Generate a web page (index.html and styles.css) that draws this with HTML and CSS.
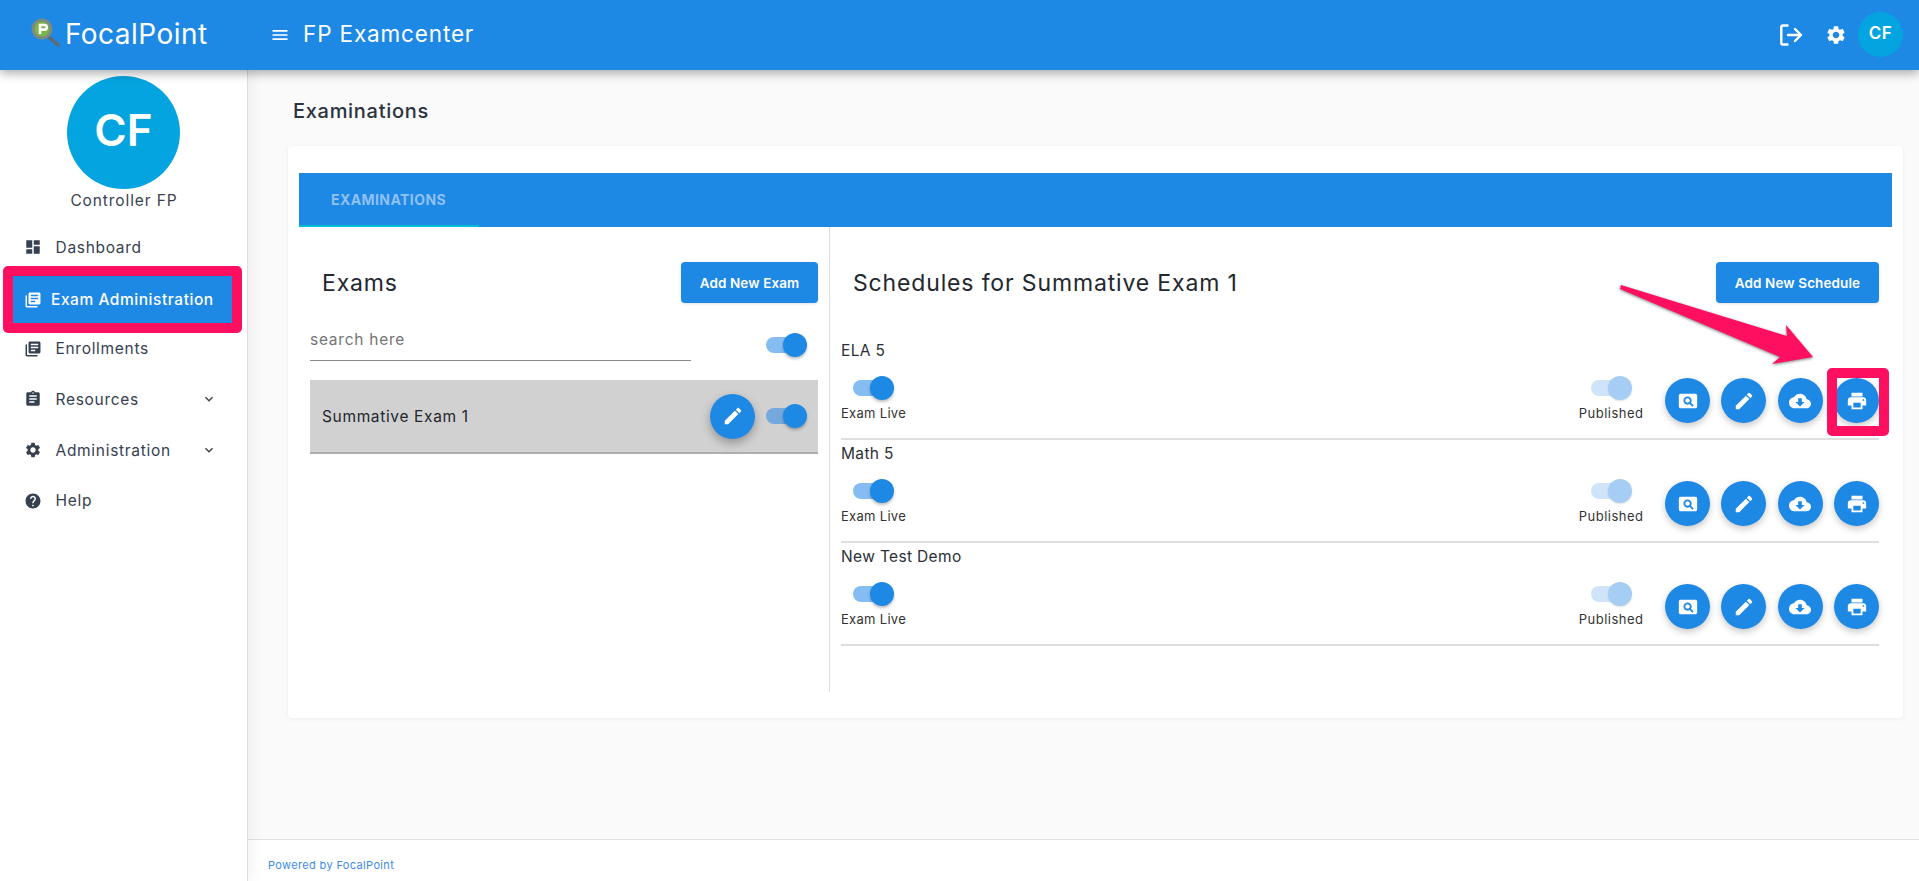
FILE: index.html
```html
<!DOCTYPE html>
<html lang="en">
<head>
<meta charset="utf-8">
<title>FP Examcenter</title>
<link rel="stylesheet" href="styles.css">
</head>
<body>
<svg class="defs" width="0" height="0" aria-hidden="true">
  <symbol id="i-dashboard" viewBox="0 0 24 24"><path d="M3 13h8V3H3v10zm0 8h8v-6H3v6zm10 0h8V11h-8v10zm0-18v6h8V3h-8z"/></symbol>
  <symbol id="i-books" viewBox="0 0 24 24"><path d="M4 6H2v14c0 1.1.9 2 2 2h14v-2H4V6zm16-4H8c-1.1 0-2 .9-2 2v12c0 1.1.9 2 2 2h12c1.1 0 2-.9 2-2V4c0-1.1-.9-2-2-2zm-1 9H9V9h10v2zm-4 4H9v-2h6v2zm4-8H9V5h10v2z"/></symbol>
  <symbol id="i-assignment" viewBox="0 0 24 24"><path d="M19 3h-4.18C14.4 1.84 13.3 1 12 1c-1.3 0-2.4.84-2.82 2H5c-1.1 0-2 .9-2 2v14c0 1.1.9 2 2 2h14c1.1 0 2-.9 2-2V5c0-1.1-.9-2-2-2zm-7 0c.55 0 1 .45 1 1s-.45 1-1 1-1-.45-1-1 .45-1 1-1zm2 14H7v-2h7v2zm3-4H7v-2h10v2zm0-4H7V7h10v2z"/></symbol>
  <symbol id="i-settings" viewBox="0 0 24 24"><path d="M19.14 12.94c.04-.3.06-.61.06-.94 0-.32-.02-.64-.07-.94l2.03-1.58c.18-.14.23-.41.12-.61l-1.92-3.32c-.12-.22-.37-.29-.59-.22l-2.39.96c-.5-.38-1.03-.7-1.62-.94l-.36-2.54c-.04-.24-.24-.41-.48-.41h-3.84c-.24 0-.43.17-.47.41l-.36 2.54c-.59.24-1.13.57-1.62.94l-2.39-.96c-.22-.08-.47 0-.59.22L2.74 8.87c-.12.21-.08.47.12.61l2.03 1.58c-.05.3-.09.63-.09.94s.02.64.07.94l-2.03 1.58c-.18.14-.23.41-.12.61l1.92 3.32c.12.22.37.29.59.22l2.39-.96c.5.38 1.03.7 1.62.94l.36 2.54c.05.24.24.41.48.41h3.84c.24 0 .44-.17.47-.41l.36-2.54c.59-.24 1.13-.56 1.62-.94l2.39.96c.22.08.47 0 .59-.22l1.92-3.32c.12-.22.07-.47-.12-.61l-2.01-1.58zM12 15.6c-1.98 0-3.6-1.62-3.6-3.6s1.62-3.6 3.6-3.6 3.6 1.62 3.6 3.6-1.62 3.6-3.6 3.6z"/></symbol>
  <symbol id="i-help" viewBox="0 0 24 24"><path d="M12 2C6.48 2 2 6.48 2 12s4.48 10 10 10 10-4.48 10-10S17.52 2 12 2zm1 17h-2v-2h2v2zm2.07-7.75l-.9.92C13.45 12.9 13 13.5 13 15h-2v-.5c0-1.1.45-2.1 1.17-2.83l1.24-1.26c.37-.36.59-.86.59-1.41 0-1.1-.9-2-2-2s-2 .9-2 2H8c0-2.21 1.79-4 4-4s4 1.79 4 4c0 .88-.36 1.68-.93 2.25z"/></symbol>
  <symbol id="i-edit" viewBox="0 0 24 24"><path d="M3 17.25V21h3.75L17.81 9.94l-3.75-3.75L3 17.25zM20.71 7.04c.39-.39.39-1.02 0-1.41l-2.34-2.34c-.39-.39-1.02-.39-1.41 0l-1.83 1.83 3.75 3.75 1.83-1.83z"/></symbol>
  <symbol id="i-print" viewBox="0 0 24 24"><path d="M19 8H5c-1.66 0-3 1.34-3 3v6h4v4h12v-4h4v-6c0-1.66-1.34-3-3-3zm-3 11H8v-5h8v5zm3-7c-.55 0-1-.45-1-1s.45-1 1-1 1 .45 1 1-.45 1-1 1zm-1-9H6v4h12V3z"/></symbol>
  <symbol id="i-cloud" viewBox="0 0 24 24"><path d="M19.35 10.04C18.67 6.59 15.64 4 12 4 9.11 4 6.6 5.64 5.35 8.04 2.34 8.36 0 10.91 0 14c0 3.31 2.69 6 6 6h13c2.76 0 5-2.24 5-5 0-2.64-2.05-4.78-4.65-4.96zM17 13l-5 5-5-5h3V9h4v4h3z"/></symbol>
  <symbol id="i-pageview" viewBox="0 0 24 24"><path d="M11.5 9C10.12 9 9 10.12 9 11.5s1.12 2.5 2.5 2.5 2.5-1.12 2.5-2.5S12.88 9 11.5 9zM20 4H4c-1.1 0-2 .9-2 2v12c0 1.1.9 2 2 2h16c1.1 0 2-.9 2-2V6c0-1.1-.9-2-2-2zm-3.21 14.21l-2.91-2.91c-.69.44-1.51.7-2.38.7C9 16 7 14 7 11.5S9 7 11.5 7 16 9 16 11.5c0 .88-.26 1.69-.7 2.39l2.91 2.9-1.42 1.42z"/></symbol>
  <symbol id="i-more" viewBox="0 0 24 24"><path d="M16.59 8.59L12 13.17 7.41 8.59 6 10l6 6 6-6z"/></symbol>
  <symbol id="i-menu" viewBox="0 0 24 24"><path d="M3 18h18v-2H3v2zm0-5h18v-2H3v2zm0-7v2h18V6H3z"/></symbol>
</svg>

<div class="app">
  <header class="topbar">
    <div class="brand">
      <svg class="brand-logo" viewBox="0 0 30 30" aria-hidden="true">
        <path class="logo-handle" d="M19 19l9 8"/>
        <circle class="logo-lens" cx="12" cy="11" r="9"/>
        <path class="logo-mark" d="M10 16V7h4.5a2.2 2.2 0 0 1 0 4.6H10"/>
      </svg>
      <span class="brand-name">FocalPoint</span>
    </div>
    <svg class="menu-icon"><use href="#i-menu"/></svg>
    <span class="app-title">FP Examcenter</span>
    <div class="top-actions">
      <svg class="logout-icon" viewBox="0 0 24 24" aria-hidden="true">
        <path d="M9 2.5H4a1.2 1.2 0 0 0-1.2 1.2v16.6A1.2 1.2 0 0 0 4 21.5h5"/>
        <path d="M9.5 12h13M16.5 6l6 6-6 6"/>
      </svg>
      <svg class="gear-icon"><use href="#i-settings"/></svg>
      <div class="top-avatar">CF</div>
    </div>
  </header>

  <div class="body">
    <aside class="sidebar">
      <div class="avatar">CF</div>
      <div class="user-name">Controller FP</div>
      <nav class="nav">
        <a class="nav-item"><svg class="nav-icon"><use href="#i-dashboard"/></svg><span>Dashboard</span></a>
        <a class="nav-item active"><svg class="nav-icon"><use href="#i-books"/></svg><span>Exam Administration</span></a>
        <a class="nav-item"><svg class="nav-icon"><use href="#i-books"/></svg><span>Enrollments</span></a>
        <a class="nav-item"><svg class="nav-icon"><use href="#i-assignment"/></svg><span>Resources</span><svg class="chev"><use href="#i-more"/></svg></a>
        <a class="nav-item"><svg class="nav-icon"><use href="#i-settings"/></svg><span>Administration</span><svg class="chev"><use href="#i-more"/></svg></a>
        <a class="nav-item"><svg class="nav-icon"><use href="#i-help"/></svg><span>Help</span></a>
      </nav>
    </aside>

    <main class="main">
      <div class="content">
        <h1 class="page-title">Examinations</h1>
        <section class="card">
          <div class="tabbar"><div class="tab">EXAMINATIONS</div></div>
          <div class="columns">
            <div class="exams">
              <div class="col-head">
                <h2 class="col-title">Exams</h2>
                <button class="btn">Add New Exam</button>
              </div>
              <div class="search-row">
                <div class="search">search here</div>
                <div class="toggle on"><i></i></div>
              </div>
              <div class="exam-row">
                <span class="exam-name">Summative Exam 1</span>
                <div class="exam-tools">
                  <button class="fab raised"><svg><use href="#i-edit"/></svg></button>
                  <div class="toggle on on-grey"><i></i></div>
                </div>
              </div>
            </div>

            <div class="schedules">
              <div class="col-head sched-head">
                <h2 class="col-title">Schedules for Summative Exam 1</h2>
                <button class="btn">Add New Schedule</button>
              </div>

              <div class="sched-row">
                <div class="sched-left">
                  <div class="sched-name">ELA 5</div>
                  <div class="toggle on inset"><i></i></div>
                  <div class="tiny">Exam Live</div>
                </div>
                <div class="sched-right">
                  <div class="pub"><div class="toggle off"><i></i></div><div class="tiny">Published</div></div>
                  <div class="fabs">
                    <button class="fab"><svg><use href="#i-pageview"/></svg></button>
                    <button class="fab"><svg><use href="#i-edit"/></svg></button>
                    <button class="fab"><svg><use href="#i-cloud"/></svg></button>
                    <button class="fab"><svg><use href="#i-print"/></svg></button>
                  </div>
                </div>
              </div>

              <div class="sched-row">
                <div class="sched-left">
                  <div class="sched-name">Math 5</div>
                  <div class="toggle on inset"><i></i></div>
                  <div class="tiny">Exam Live</div>
                </div>
                <div class="sched-right">
                  <div class="pub"><div class="toggle off"><i></i></div><div class="tiny">Published</div></div>
                  <div class="fabs">
                    <button class="fab"><svg><use href="#i-pageview"/></svg></button>
                    <button class="fab"><svg><use href="#i-edit"/></svg></button>
                    <button class="fab"><svg><use href="#i-cloud"/></svg></button>
                    <button class="fab"><svg><use href="#i-print"/></svg></button>
                  </div>
                </div>
              </div>

              <div class="sched-row">
                <div class="sched-left">
                  <div class="sched-name">New Test Demo</div>
                  <div class="toggle on inset"><i></i></div>
                  <div class="tiny">Exam Live</div>
                </div>
                <div class="sched-right">
                  <div class="pub"><div class="toggle off"><i></i></div><div class="tiny">Published</div></div>
                  <div class="fabs">
                    <button class="fab"><svg><use href="#i-pageview"/></svg></button>
                    <button class="fab"><svg><use href="#i-edit"/></svg></button>
                    <button class="fab"><svg><use href="#i-cloud"/></svg></button>
                    <button class="fab"><svg><use href="#i-print"/></svg></button>
                  </div>
                </div>
              </div>
            </div>
          </div>
        </section>
      </div>
      <footer class="footer">Powered by FocalPoint</footer>
    </main>
  </div>
</div>

<div class="mark mark-nav"></div>
<div class="mark mark-print"></div>
<svg class="mark-arrow" viewBox="0 0 1919 881" aria-hidden="true">
  <path d="M1621 285L1787 336L1786 325L1813 357L1772 364L1780 357L1620 289Z"/>
</svg>
</body>
</html>
```

FILE: styles.css
```css
* { box-sizing: border-box; }
html, body { margin: 0; height: 100%; overflow: hidden; }
body {
  font-family: Inter, "Noto Sans", "Liberation Sans", sans-serif;
  color: #2b2f36;
  background: #fafafa;
  position: relative;
}
.defs { position: absolute; }
svg { fill: currentColor; display: block; }
h1, h2 { margin: 0; font-weight: 400; }
button { font-family: inherit; border: 0; cursor: pointer; }

.app { height: 100vh; display: flex; flex-direction: column; }

/* top bar */
.topbar {
  height: 70px;
  flex: none;
  background: #1e88e5;
  color: #fff;
  display: flex;
  align-items: center;
  padding: 0 16px 0 30px;
  box-shadow: 0 3px 10px rgba(0, 0, 0, .35);
  position: relative;
  z-index: 3;
}
.brand { display: flex; align-items: center; width: 241px; }
.brand-logo { width: 30px; height: 30px; margin-right: 5px; margin-top: -4px; fill: none; }
.logo-lens { fill: #7ab648; stroke: #7c8a80; stroke-width: 3; }
.logo-handle { stroke: #5d6a70; stroke-width: 3.5; stroke-linecap: round; }
.logo-mark { stroke: #fff; stroke-width: 2.6; fill: none; }
.brand-name { font-size: 28px; letter-spacing: .45px; line-height: 1; margin-top: -3px; }
.menu-icon { width: 20px; height: 20px; flex: none; margin-left: -1px; }
.app-title { font-size: 22.5px; margin-left: 13px; letter-spacing: .85px; margin-top: -3px; }
.top-actions { margin-left: auto; display: flex; align-items: center; }
.logout-icon { width: 25px; height: 24px; fill: none; stroke: #fff; stroke-width: 2.4; stroke-linecap: round; stroke-linejoin: round; }
.gear-icon { width: 22px; height: 22px; margin-left: 22px; }
.top-avatar {
  width: 45px; height: 45px; border-radius: 50%;
  background: #03a4e0; color: #fff;
  font-size: 17px; font-weight: 600; letter-spacing: .5px;
  display: flex; align-items: center; justify-content: center;
  margin-left: 11px; margin-top: -2px; padding-bottom: 3px;
}

/* layout */
.body { flex: 1; display: flex; min-height: 0; }
.sidebar {
  width: 248px; flex: none;
  background: #fff;
  border-right: 1px solid #ddd;
  box-shadow: 4px 0 14px rgba(0, 0, 0, .05);
  padding-top: 6px;
  position: relative;
  z-index: 2;
}
.avatar {
  width: 113px; height: 113px; border-radius: 50%;
  background: #03a4e0; color: #fff;
  margin: 0 auto 0 67px;
  display: flex; align-items: center; justify-content: center;
  font-size: 44px; font-weight: 600; padding-bottom: 6px;
}
.user-name { text-align: center; font-size: 15.5px; color: #3a4250; margin-top: 1px; line-height: 22px; padding-left: 1px; letter-spacing: .9px; }

.nav { margin-top: 10px; }
.nav-item {
  height: 50.6px; display: flex; align-items: center;
  padding: 0 50px 0 25px;
  color: #36404f; font-size: 15.5px; letter-spacing: .7px;
}
.nav-item span { margin-left: 14.5px; flex: 1; white-space: nowrap; }
.nav-icon { width: 16px; height: 16px; flex: none; transform: scale(1.12); }
.nav-item.active {
  height: 48px; margin: 3px 15px 0 13px;
  padding: 0 0 0 12px;
  background: #1e88e5; color: #fff; font-weight: 500; letter-spacing: .55px;
}
.nav-item.active span { margin-left: 10px; }
.chev { width: 16px; height: 16px; flex: none; margin-right: -20px; }

.main { flex: 1; min-width: 0; display: flex; flex-direction: column; }
.content { flex: 1; padding: 28px 16px 0 40px; }
.page-title { font-size: 20px; line-height: 26px; color: #2b3240; font-weight: 500; margin: 0 0 22px 5px; letter-spacing: .7px; }
.footer {
  height: 42px; flex: none;
  background: #fff; border-top: 1px solid #e2e2e2;
  padding: 17px 0 0 20px;
  font-size: 11px; line-height: 16px; color: #3d8ae6; letter-spacing: .35px;
}

/* card */
.card {
  height: 572px;
  background: #fff; border-radius: 4px;
  box-shadow: 0 1px 4px rgba(0, 0, 0, .06);
  padding: 27px 11px 0;
}
.tabbar { height: 54px; background: #1e88e5; }
.tab {
  width: 180px; height: 54px;
  padding-left: 32px;
  line-height: 53px;
  color: #8fc1f2; font-size: 14px; font-weight: 700; letter-spacing: .42px;
  border-bottom: 2px solid #00bcd4;
}
.columns { display: flex; height: 465px; }
.exams { width: 531px; flex: none; border-right: 1px solid #ddd; padding: 35px 11px 0 11px; }
.schedules { flex: 1; padding: 35px 13px 0 11px; }

.col-head { display: flex; justify-content: space-between; align-items: center; height: 41px; padding-left: 12px; }
.sched-head { margin-bottom: 34px; }
.col-title { font-size: 23px; color: #23272e; letter-spacing: .85px; }
.btn {
  height: 41px; padding: 0;
  background: #1e88e5; color: #fff;
  border-radius: 4px;
  font-size: 13.5px; font-weight: 600; letter-spacing: .1px;
  box-shadow: 0 1px 3px rgba(0, 0, 0, .12);
}
.exams .btn { width: 137px; }
.schedules .btn { width: 163px; }

.search-row { display: flex; justify-content: space-between; align-items: center; height: 58px; padding-right: 11px; }
.search {
  width: 381px; height: 45px; margin-top: 13px; padding-top: 13px;
  border-bottom: 1px solid #8a8a8a;
  color: #757575; font-size: 15.5px; line-height: 22px; letter-spacing: .75px;
}
.search-row .toggle { margin-top: 25px; }

.exam-row {
  height: 74px; margin-top: 19px;
  background: #d1d1d1;
  border-bottom: 2px solid #aeaeae;
  display: flex; align-items: center; justify-content: space-between;
  padding: 0 11px 0 12px;
}
.exam-name { font-size: 15.5px; color: #23272e; letter-spacing: .65px; }
.exam-tools { display: flex; align-items: center; gap: 11px; }

/* toggles */
.toggle { width: 41px; height: 24px; position: relative; flex: none; }
.toggle::before {
  content: ""; position: absolute; left: 0; top: 4px;
  width: 38px; height: 16px; border-radius: 8px;
  background: #85bdf2;
}
.toggle i {
  position: absolute; right: 0; top: 0;
  width: 24px; height: 24px; border-radius: 50%;
  background: #1e88e5;
  box-shadow: 0 2px 3px rgba(0, 0, 0, .25);
}
.toggle.on-grey::before { background: #75a8dd; }
.toggle.off::before { background: #cfe4f9; }
.toggle.off i { background: #a6cdf4; box-shadow: 0 1px 2px rgba(0, 0, 0, .12); }
.toggle.inset { margin-left: 12px; }

/* fabs */
.fab {
  width: 45px; height: 45px; border-radius: 50%; padding: 0;
  background: #1e88e5; color: #fff;
  display: flex; align-items: center; justify-content: center;
  box-shadow: 0 3px 7px rgba(0, 0, 0, .22);
  flex: none;
}
.fab svg { width: 22px; height: 22px; }
.fab.raised { box-shadow: 0 4px 10px rgba(0, 0, 0, .3); }
.fabs { display: flex; gap: 11.3px; margin-left: 21px; }

/* schedule rows */
.sched-row {
  height: 103px;
  border-bottom: 2px solid #dedede;
  padding-bottom: 15px;
  display: flex; justify-content: space-between; align-items: flex-end;
}
.sched-name { font-size: 15.5px; line-height: 24px; color: #2b2f36; margin-bottom: 13px; letter-spacing: .35px; }
.tiny { font-size: 13px; line-height: 20px; margin-top: 3px; color: #333; letter-spacing: .3px; white-space: nowrap; }
.sched-right { display: flex; align-items: flex-end; }
.pub { display: flex; flex-direction: column; align-items: center; width: 66px; margin-left: -1px; }
.pub .tiny { letter-spacing: .5px; }

/* annotations laid over the screenshot */
.mark { position: absolute; border: 10px solid #ff0f5f; border-radius: 5px; pointer-events: none; z-index: 4; }
.mark-nav { left: 3px; top: 266px; width: 239px; height: 67px; }
.mark-print { left: 1827px; top: 368px; width: 62px; height: 68px; }
.mark-arrow {
  position: absolute; left: 0; top: 0; width: 1919px; height: 881px;
  pointer-events: none; fill: #ff0f5f;
  filter: drop-shadow(0 1px 1.5px rgba(0, 0, 0, .5));
  z-index: 4;
}
```
